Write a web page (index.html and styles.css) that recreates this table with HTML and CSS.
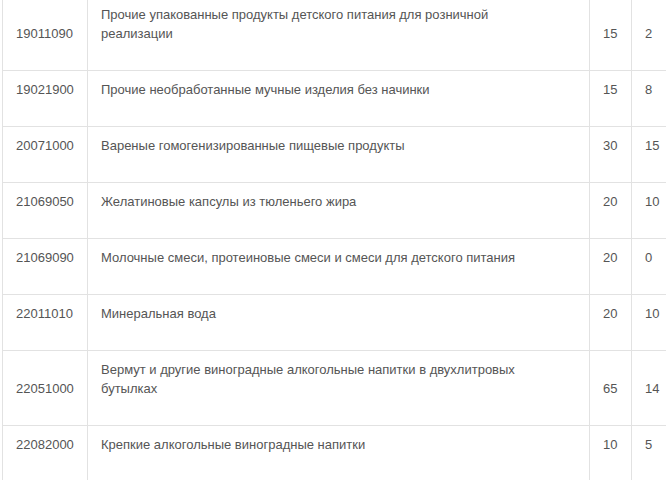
FILE: index.html
```html
<!DOCTYPE html>
<html lang="ru">
<head>
<meta charset="utf-8">
<title>Таблица</title>
<link rel="stylesheet" href="styles.css">
</head>
<body>
<div class="viewport">
<table class="tariffs">
  <colgroup>
    <col class="c-code">
    <col class="c-desc">
    <col class="c-num">
    <col class="c-num2">
  </colgroup>
  <tbody>
    <tr><td>19011090</td><td class="desc">Прочие упакованные продукты детского питания для розничной реализации</td><td>15</td><td>2</td></tr>
    <tr><td>19021900</td><td class="desc">Прочие необработанные мучные изделия без начинки</td><td>15</td><td>8</td></tr>
    <tr><td>20071000</td><td class="desc">Вареные гомогенизированные пищевые продукты</td><td>30</td><td>15</td></tr>
    <tr><td>21069050</td><td class="desc">Желатиновые капсулы из тюленьего жира</td><td>20</td><td>10</td></tr>
    <tr><td>21069090</td><td class="desc">Молочные смеси, протеиновые смеси и смеси для детского питания</td><td>20</td><td>0</td></tr>
    <tr><td>22011010</td><td class="desc">Минеральная вода</td><td>20</td><td>10</td></tr>
    <tr><td>22051000</td><td class="desc">Вермут и другие виноградные алкогольные напитки в двухлитровых бутылках</td><td>65</td><td>14</td></tr>
    <tr><td>22082000</td><td class="desc">Крепкие алкогольные виноградные напитки</td><td>10</td><td>5</td></tr>
  </tbody>
</table>
</div>
</body>
</html>
```

FILE: styles.css
```css
html, body {
  margin: 0;
  padding: 0;
  background: #fff;
}
.viewport {
  width: 666px;
  height: 480px;
  overflow: hidden;
}
.tariffs {
  margin: -5px 0 0 2px;
  border-collapse: collapse;
  table-layout: fixed;
  width: 700px;
  font-family: "Liberation Sans", Arial, sans-serif;
  font-size: 13px;
  line-height: 19px;
  color: #555;
}
.c-code { width: 85px; }
.c-desc { width: 502px; }
.c-num { width: 42px; }
.c-num2 { width: 71px; }
.tariffs td {
  border: 1px solid #e2e2e2;
  padding: 9px 12px 27px 13px;
  vertical-align: bottom;
  text-align: left;
}
.tariffs td.desc {
  padding-right: 50px;
}
```
